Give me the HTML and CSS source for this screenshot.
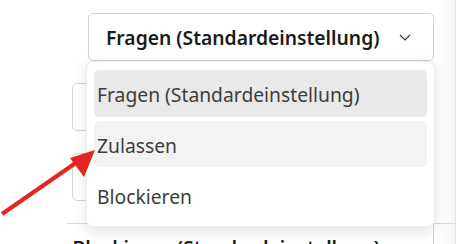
FILE: index.html
```html
<!DOCTYPE html>
<html lang="de">
<head>
<meta charset="utf-8">
<link rel="stylesheet" href="styles.css">
</head>
<body>
<div class="page">
  <div class="main">
    <div class="row-top">
      <div class="select">
        <span class="select-text">Fragen (Standardeinstellung)</span>
        <svg class="chev" width="12" height="7" viewBox="0 0 12 7"><path d="M1 1 L6 6 L11 1" fill="none" stroke="#333" stroke-width="1.1"/></svg>
      </div>
    </div>
    <div class="fields">
      <div class="field"></div>
      <div class="field"></div>
    </div>
    <div class="separator"></div>
    <div class="row-bottom">
      <div class="select-bottom">
        <span class="select-text">Blockieren (Standardeinstellung)</span>
        <svg class="chev" width="12" height="7" viewBox="0 0 12 7"><path d="M1 1 L6 6 L11 1" fill="none" stroke="#333" stroke-width="1.1"/></svg>
      </div>
    </div>
    <div class="dropdown">
      <div class="option selected">Fragen (Standardeinstellung)</div>
      <div class="option hover">Zulassen</div>
      <div class="option">Blockieren</div>
    </div>
    <svg class="arrow" width="120" height="90" viewBox="0 0 120 90">
      <line x1="2" y1="84" x2="80" y2="30" stroke="#e52521" stroke-width="4.2"/>
      <polygon points="95,20 70,28 84,47" fill="#e52521"/>
    </svg>
  </div>
  <div class="side"></div>
</div>
</body>
</html>
```
FILE: styles.css
```css
html, body {
  margin: 0;
  padding: 0;
  background: #ffffff;
}
body {
  width: 472px;
  height: 244px;
  overflow: hidden;
  font-family: "Noto Sans", "Open Sans", sans-serif;
}
.page {
  display: flex;
  height: 244px;
  overflow: hidden;
}
.main {
  position: relative;
  width: 456px;
  flex: none;
  border-right: 1px solid #e3e3e3;
  padding-top: 13px;
  box-sizing: border-box;
  background: linear-gradient(to right, #ffffff 0, #ffffff 440px, #f4f4f4 455px);
}
.side {
  flex: 1;
  background: #ffffff;
}
.row-top {
  display: flex;
  justify-content: flex-end;
  padding-right: 21px;
}
.select {
  box-sizing: border-box;
  width: 346px;
  height: 48px;
  border: 1px solid #d2d2d2;
  border-radius: 5px;
  display: flex;
  align-items: center;
  padding-left: 17px;
  padding-right: 22px;
  justify-content: space-between;
}
.select-text {
  font-size: 19.3px;
  font-weight: 600;
  color: #1b1b1b;
  white-space: nowrap;
}
.chev {
  display: block;
}
.fields {
  margin-left: 72px;
  margin-right: 24px;
  margin-top: 22px;
  display: flex;
  flex-direction: column;
  gap: 22px;
}
.field {
  height: 46px;
  border: 1px solid #d6d6d6;
  border-radius: 5px;
}
.separator {
  margin-top: 22px;
  margin-left: 67px;
  border-top: 1px solid #dcdcdc;
}
.row-bottom {
  display: flex;
  justify-content: flex-end;
  padding-right: 21px;
}
.select-bottom {
  box-sizing: border-box;
  height: 46px;
  border-right: 1px solid #d2d2d2;
  display: flex;
  align-items: center;
  gap: 16px;
  padding-left: 6px;
  padding-right: 25px;
}
.dropdown {
  position: absolute;
  left: 86px;
  top: 61px;
  width: 349px;
  height: 166px;
  box-sizing: border-box;
  background: #ffffff;
  border: 1px solid #ececec;
  border-radius: 7px;
  box-shadow: 0 4px 14px rgba(0, 0, 0, 0.12);
  padding: 8px 7px;
  display: flex;
  flex-direction: column;
  gap: 4px;
}
.option {
  box-sizing: border-box;
  height: 47px;
  border-radius: 5px;
  display: flex;
  align-items: center;
  padding-left: 3px;
  padding-top: 3px;
  font-size: 19.3px;
  color: #3d3d3d;
  white-space: nowrap;
}
.option.selected {
  background: #e9e9e9;
}
.option.hover {
  background: #f3f3f3;
}
.arrow {
  position: absolute;
  left: 0;
  top: 130px;
}
```
